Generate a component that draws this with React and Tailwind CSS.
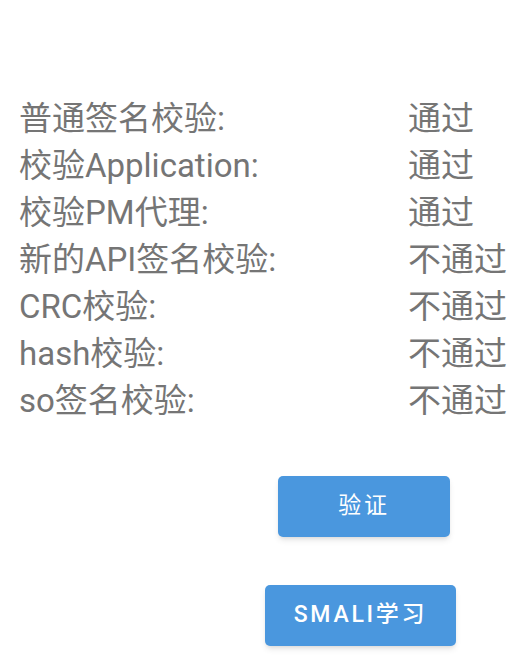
import React from "react";

const rows = [
  ["普通签名校验:", "通过"],
  ["校验Application:", "通过"],
  ["校验PM代理:", "通过"],
  ["新的API签名校验:", "不通过"],
  ["CRC校验:", "不通过"],
  ["hash校验:", "不通过"],
  ["so签名校验:", "不通过"],
];

export default function App() {
  return (
    <div
      className="min-h-[663px] w-[527px] bg-white"
      style={{ fontFamily: "Roboto, 'Noto Sans CJK SC', sans-serif" }}
    >
      <div className="pt-[95px] pl-[19px]">
        {rows.map(([label, result]) => (
          <div key={label} className="flex text-[33px] leading-[47px] text-[#757575]">
            <div className="w-[389px] shrink-0">{label}</div>
            <div>{result}</div>
          </div>
        ))}
      </div>
      <div className="flex flex-col items-start pt-[52px]">
        <button className="ml-[278px] h-[61px] w-[172px] rounded-[5px] bg-[#4a97de] text-[23px] tracking-[0.12em] text-white shadow-md">
          验证
        </button>
        <button className="ml-[265px] mt-[48px] h-[61px] w-[191px] rounded-[5px] bg-[#4a97de] text-[23px] font-medium tracking-[0.12em] text-white shadow-md">
          SMALI学习
        </button>
      </div>
    </div>
  );
}
